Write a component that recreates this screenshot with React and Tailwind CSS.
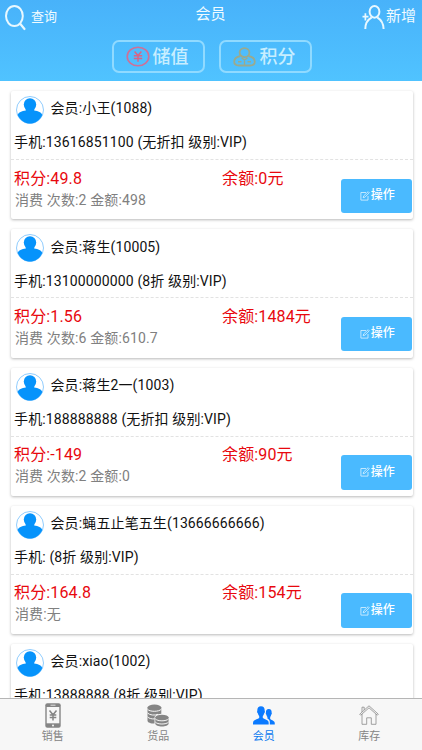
const members = [
  { name: "小王(1088)", phone: "13616851100", info: "(无折扣 级别:VIP)", points: "49.8", balance: "0", spend: "消费 次数:2 金额:498" },
  { name: "蒋生(10005)", phone: "13100000000", info: "(8折 级别:VIP)", points: "1.56", balance: "1484", spend: "消费 次数:6 金额:610.7" },
  { name: "蒋生2一(1003)", phone: "188888888", info: "(无折扣 级别:VIP)", points: "-149", balance: "90", spend: "消费 次数:2 金额:0" },
  { name: "蝇五止笔五生(13666666666)", phone: "", info: "(8折 级别:VIP)", points: "164.8", balance: "154", spend: "消费:无" },
  { name: "xiao(1002)", phone: "13888888", info: "(8折 级别:VIP)", points: "0", balance: "0", spend: "消费:无" },
];

function SearchIcon() {
  return (
    <svg width="22" height="27" viewBox="0 0 22 27" fill="none" stroke="#e8f8ff" strokeWidth="2" strokeLinecap="round">
      <ellipse cx="9.4" cy="12" rx="8.4" ry="10" />
      <path d="M15.6 20.3L19.5 25" strokeWidth="2.2" />
    </svg>
  );
}

function AddUserIcon() {
  return (
    <svg width="23" height="26" viewBox="0 0 23 26" fill="none" stroke="#e8f8ff" strokeWidth="2">
      <ellipse cx="12.5" cy="7.8" rx="4.9" ry="5.9" />
      <path d="M3.3 25C3.3 19.3 5.4 15.8 9.8 13.4M15.2 13.4C19.4 15.8 21.4 19.3 21.6 25" />
      <path d="M0.5 12.7H6.5M3.4 9.2V16.4" strokeWidth="1.7" />
    </svg>
  );
}

function CoinIcon() {
  return (
    <svg width="24" height="21" viewBox="0 0 24 21" fill="none" stroke="#cf7097" strokeWidth="1.6">
      <ellipse cx="12" cy="10.5" rx="10.8" ry="9.3" />
      <path d="M8.6 5.6L12 9.5L15.4 5.6M12 9.5V15.8M7.8 9.8H16.2M7.8 12.5H16.2" stroke="#d86586" strokeWidth="1.5" />
    </svg>
  );
}

function PointsIcon() {
  return (
    <svg width="23" height="20" viewBox="0 0 23 20" fill="none" stroke="#9aaa8e" strokeWidth="1.8">
      <ellipse cx="11.5" cy="5.6" rx="4.9" ry="4.5" />
      <path d="M7.5 9C3.5 9.8 1.2 11.8 1.2 14.8C1.2 17.3 3 18.5 6 18.5H17C20 18.5 21.8 17.3 21.8 14.8C21.8 11.8 19.5 9.8 15.5 9" />
      <path d="M8.5 11L11.5 13L14.5 11M11.5 13V18M5 14.8H8.5M14.5 14.8H18" strokeWidth="1.4" />
    </svg>
  );
}

function Avatar() {
  return (
    <svg className="shrink-0" width="28" height="28" viewBox="0 0 28 28">
      <circle cx="14" cy="14" r="13.5" fill="white" stroke="#73bffc" strokeWidth="0.8" />
      <ellipse cx="14" cy="8.6" rx="6.2" ry="6.4" fill="#0693fb" />
      <path d="M9.8 11.5H18.2V14.6C22.2 15 25.6 16.6 26.3 19C24 24.3 19.3 27.6 14 27.6C8.7 27.6 4 24.3 1.7 19C2.4 16.6 5.8 15 9.8 14.6Z" fill="#0693fb" />
    </svg>
  );
}

function EditIcon() {
  return (
    <svg width="10" height="10" viewBox="0 0 10 10" fill="none" stroke="#dff4ff" strokeWidth="0.8">
      <path d="M6 1.5H0.9V9.1H8V5" />
      <path d="M3.2 6.7L3.7 4.9L8.2 0.7L9.3 1.8L4.9 6.2Z" />
    </svg>
  );
}

function MemberCard({ member }) {
  return (
    <div className="h-[128.3px] shrink-0 rounded-[2px] bg-white shadow-[0_1px_3px_rgba(0,0,0,0.28)]">
      <div className="flex h-[37px] items-center pl-[5px] pt-[1px]">
        <Avatar />
        <span className="-mt-[3.5px] ml-[6.5px] tracking-[0.12px]">会员:{member.name}</span>
      </div>
      <div className="flex h-[32px] items-center border-b border-dashed border-[#e2e2e2] pb-[2.5px] pl-[3px]">
        <span className="tracking-[0.13px]">
          手机:{member.phone} {member.info}
        </span>
      </div>
      <div className="flex h-[59px] justify-between">
        <div className="w-[208px] pl-[3px] pt-[7.5px]">
          <p className="text-base leading-[22px] tracking-[0.14px] text-[#e8080e]">积分:{member.points}</p>
          <p className="pl-[1px] leading-[21.5px] tracking-[0.12px] text-[#808080]">{member.spend}</p>
        </div>
        <p className="flex-1 pl-[3px] pt-[7.5px] text-base leading-[22px] tracking-[0.14px] text-[#e8080e]">余额:{member.balance}元</p>
        <button className="mt-[18.5px] mr-[1px] -ml-[72px] flex h-[34.5px] w-[71px] items-center justify-center gap-[1px] self-start rounded-[3px] bg-[#4abaff] pl-[1.5px] text-[12px] font-medium text-white">
          <EditIcon />
          操作
        </button>
      </div>
    </div>
  );
}

function PhoneIcon() {
  return (
    <svg width="16" height="25" viewBox="0 0 16 25">
      <rect x="0.3" y="0.3" width="15.4" height="24.4" rx="2" fill="#858585" />
      <path d="M1.7 4H14.3V20.3H1.7Z" fill="#f7f7f7" />
      <path d="M5.5 2.2H10.5" stroke="#f7f7f7" strokeWidth="0.8" />
      <circle cx="8" cy="22.5" r="1" fill="#f7f7f7" />
      <path d="M4.5 7.5L8 11.8L11.5 7.5M8 11.8V17.5M4.7 12H11.3M4.7 14.6H11.3" fill="none" stroke="#858585" strokeWidth="1.5" />
    </svg>
  );
}

function GoodsIcon() {
  return (
    <svg width="22" height="23" viewBox="0 0 22 23">
      <path d="M0.5 3.5V16.7C0.5 18.4 3.8 19.6 7.5 19.6V14C7.5 11.6 10 10.2 14.3 9.8V3.5Z" fill="#858585" />
      <ellipse cx="7.4" cy="3.5" rx="6.9" ry="3" fill="#858585" />
      <path d="M0.5 5.2C2.5 8 12 8 14.3 5.2M0.5 9C2.5 11.3 8 11.6 11 10.3M0.5 12.8C2 14.6 5 15.1 7.7 14.9" fill="none" stroke="#f7f7f7" strokeWidth="1" />
      <path d="M8.3 13.5V19.5C8.3 23.4 21.6 23.4 21.6 19.5V13.5Z" fill="#858585" />
      <ellipse cx="14.9" cy="13.5" rx="6.7" ry="2.8" fill="#858585" />
      <path d="M8.3 14.8C10.3 17.5 19.5 17.5 21.6 14.8M8.3 18C10.3 20.7 19.5 20.7 21.6 18" fill="none" stroke="#f7f7f7" strokeWidth="1" />
    </svg>
  );
}

function MembersIcon() {
  return (
    <svg width="22" height="19" viewBox="0 0 22 19" fill="#0b7aff">
      <path d="M8 0.2C5.3 0.2 4.1 2 4.4 4.6C3.8 4.9 4.2 7 4.9 7.3C5.1 8.6 5.6 9.5 6.2 10V12C4.5 13.2 1.5 13.7 0.6 15.1C0 16 0 17.6 0 18.6H15.7C15.7 17.6 15.8 16 15.2 15.1C14.3 13.7 11.4 13.2 9.8 12V10C10.4 9.5 10.9 8.6 11.1 7.3C11.8 7 12.2 4.9 11.6 4.6C11.9 2 10.7 0.2 8 0.2Z" />
      <path d="M15.8 2.9C13.7 2.9 12.7 4.4 13 6.5C12.5 6.8 12.8 8.5 13.4 8.8C13.5 9.8 13.9 10.5 14.4 10.9V12.6C15.5 13.4 16.6 14.2 16.8 15.6V18.6H21.8C21.8 17.6 21.8 16.4 21.3 15.7C20.5 14.5 18.4 13.9 17.2 12.9V10.9C17.7 10.5 18 9.8 18.2 8.8C18.8 8.5 19.1 6.8 18.6 6.5C18.9 4.4 17.9 2.9 15.8 2.9Z" />
    </svg>
  );
}

function HouseIcon() {
  return (
    <svg width="20" height="20" viewBox="0 0 20 20" fill="none" stroke="#8a8a8a" strokeWidth="0.8">
      <path d="M0.7 9.2L10 0.8L19.3 9.2L18.3 10.2L10 2.8L1.7 10.2Z" />
      <path d="M3 9V19.3H7.7V12.8H12.3V19.3H17V9M3 7V2.2H5.2V5" />
    </svg>
  );
}

const tabs = [
  { label: "销售", icon: PhoneIcon },
  { label: "货品", icon: GoodsIcon },
  { label: "会员", icon: MembersIcon, active: true },
  { label: "库存", icon: HouseIcon },
];

export default function App() {
  return (
    <div className="flex h-[750px] w-[422px] flex-col overflow-hidden bg-white font-[Roboto,'Noto_Sans_CJK_SC',sans-serif] text-sm text-[#111]">
      <header className="h-[81px] shrink-0 bg-linear-to-b from-[#48b2fa] to-[#50c3ff] text-[#f0fbff]">
        <div className="flex h-[34px] justify-between">
          <button className="flex w-[90px] items-start gap-[4px] pl-[5px] pt-[4px] text-[13px]">
            <SearchIcon />
            <span className="mt-[3.5px]">查询</span>
          </button>
          <h1 className="-ml-[1px] pt-[2px] text-[15px] leading-[24px]">会员</h1>
          <button className="flex w-[90px] items-start justify-end gap-[1px] pr-[6px] pt-[4px] text-[15px]">
            <AddUserIcon />
            <span className="mt-[1.5px]">新增</span>
          </button>
        </div>
        <div className="flex justify-center gap-[14px] pl-[1px] pt-[6px]">
          <button className="flex h-[33px] w-[93px] items-center justify-center gap-[3px] rounded-[7px] border-2 border-[#90daff] pr-[2px] text-[18px] font-medium text-[#c8eeff]">
            <CoinIcon />
            储值
          </button>
          <button className="flex h-[33px] w-[93px] items-center justify-center gap-[4px] rounded-[7px] border-2 border-[#90daff] pr-[2px] text-[18px] font-medium text-[#c8eeff]">
            <PointsIcon />
            积分
          </button>
        </div>
      </header>

      <main className="flex min-h-0 flex-1 flex-col gap-[10px] overflow-hidden pl-[11px] pr-[9px] pt-[10px]">
        {members.map((member) => (
          <MemberCard key={member.name} member={member} />
        ))}
      </main>

      <nav className="grid h-[52px] shrink-0 grid-cols-4 border-t border-[#b5b5b5] bg-[#f7f7f7] text-[11px]">
        {tabs.map(({ label, icon: Icon, active }) => (
          <button key={label} className={`flex flex-col items-center ${active ? "text-[#0b79ef]" : "text-[#858585]"}`}>
            <span className="flex h-[30px] items-center pt-[2px]">
              <Icon />
            </span>
            <span className="leading-[16px]">{label}</span>
          </button>
        ))}
      </nav>
    </div>
  );
}
